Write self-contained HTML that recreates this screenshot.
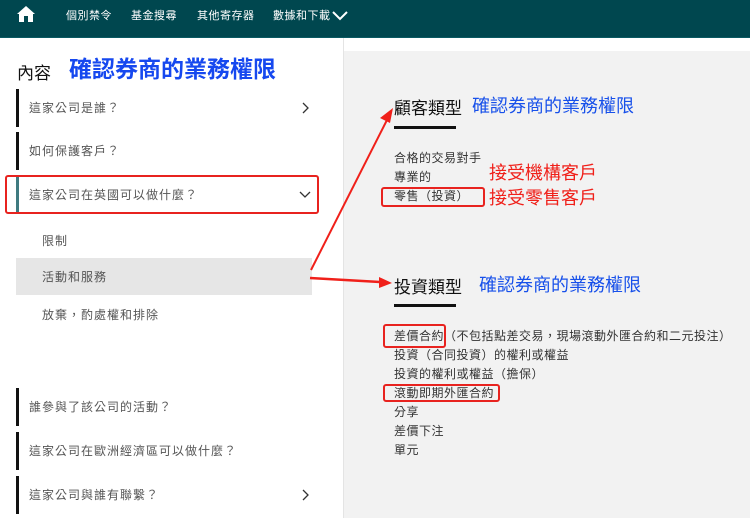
<!DOCTYPE html>
<html><head><meta charset="utf-8"><style>
*{margin:0;padding:0;box-sizing:border-box}
body{width:750px;height:518px;overflow:hidden;background:#fff;font-family:"Liberation Sans","Noto Sans CJK TC",sans-serif;position:relative;color:#333}
.nav{position:absolute;left:0;top:0;width:750px;height:38px;background:#00474f;border-bottom:1px solid #0a5a63}
.nav span{position:absolute;top:7px;color:#fff;font-size:11px;letter-spacing:.5px}
.right{position:absolute;left:343px;top:51px;width:407px;height:467px;background:#f2f2f2;border-left:1px solid #e4e4e4}
.rtop{position:absolute;left:343px;top:38px;width:407px;height:13px;border-left:1px solid #e4e4e4;background:#fff}
.t{position:absolute;white-space:nowrap}
.item{position:absolute;left:16px;height:38px;border-left:3px solid #111;width:300px;font-size:12px;color:#555;padding-left:10px;line-height:38px;letter-spacing:1px}
.sub{position:absolute;left:42px;font-size:12px;color:#555;letter-spacing:1px}
.list{position:absolute;left:394px;font-size:12px;color:#333;line-height:19px;letter-spacing:.5px}
.box{position:absolute;border:2px solid #e8231f;border-radius:3px}
.blue{color:#1750ea}
</style></head><body>
<div class="nav">
<svg style="position:absolute;left:16px;top:5px" width="20" height="18" viewBox="0 0 20 18"><path d="M10 1 L19 9 L17 9 L17 17 L12 17 L12 11 L8 11 L8 17 L3 17 L3 9 L1 9 Z" fill="#fff"/></svg>
<span style="left:66px">個別禁令</span><span style="left:131px">基金搜尋</span><span style="left:197px">其他寄存器</span><span style="left:273px">數據和下載</span>
<svg style="position:absolute;left:332px;top:10px" width="16" height="11" viewBox="0 0 16 11"><path d="M1 2 L8 9 L15 2" stroke="#fff" stroke-width="2" fill="none"/></svg>
</div>
<div class="rtop"></div>
<div class="right"></div>

<div class="t" style="left:17px;top:59px;font-size:17px;color:#111">內容</div>
<div class="t" style="left:69px;top:50px;font-size:23px;font-weight:bold;color:#1648ef">確認券商的業務權限</div>

<div class="item" style="top:89px">這家公司是誰？</div>
<svg style="position:absolute;left:302px;top:102px" width="8" height="12" viewBox="0 0 8 12"><path d="M1 1 L6 6 L1 11" stroke="#333" stroke-width="1.3" fill="none"/></svg>
<div class="item" style="top:132px">如何保護客戶？</div>
<div class="item" style="top:176px;border-left-color:#3f7a80">這家公司在英國可以做什麼？</div>
<svg style="position:absolute;left:299px;top:191px" width="12" height="8" viewBox="0 0 12 8"><path d="M1 1 L6 6 L11 1" stroke="#333" stroke-width="1.3" fill="none"/></svg>
<div class="box" style="left:5px;top:175px;width:314px;height:39px"></div>

<div class="sub" style="top:232px">限制</div>
<div style="position:absolute;left:16px;top:258px;width:296px;height:37px;background:#e6e6e6"></div>
<div class="sub" style="top:268px">活動和服務</div>
<div class="sub" style="top:306px">放棄，酌處權和排除</div>

<div class="item" style="top:388px">誰參與了該公司的活動？</div>
<div class="item" style="top:432px">這家公司在歐洲經濟區可以做什麼？</div>
<div class="item" style="top:476px">這家公司與誰有聯繫？</div>
<svg style="position:absolute;left:302px;top:489px" width="8" height="12" viewBox="0 0 8 12"><path d="M1 1 L6 6 L1 11" stroke="#333" stroke-width="1.3" fill="none"/></svg>

<div class="t" style="left:394px;top:94px;font-size:17px;color:#111">顧客類型</div>
<div class="t blue" style="left:472px;top:92px;font-size:18px">確認券商的業務權限</div>
<div style="position:absolute;left:394px;top:126px;width:62px;height:3px;background:#111"></div>
<div class="list" style="top:149px">合格的交易對手<br>專業的<br>零售（投資）</div>
<div class="box" style="left:381px;top:187px;width:104px;height:20px"></div>
<div class="t" style="left:489px;top:159px;font-size:18px;color:#f0201a">接受機構客戶</div>
<div class="t" style="left:489px;top:184px;font-size:18px;color:#f0201a">接受零售客戶</div>

<div class="t" style="left:394px;top:273px;font-size:17px;color:#111">投資類型</div>
<div class="t blue" style="left:479px;top:271px;font-size:18px">確認券商的業務權限</div>
<div style="position:absolute;left:394px;top:304px;width:62px;height:3px;background:#111"></div>
<div class="list" style="top:327px">差價合約（不包括點差交易，現場滾動外匯合約和二元投注）<br>投資（合同投資）的權利或權益<br>投資的權利或權益（擔保）<br>滾動即期外匯合約<br>分享<br>差價下注<br>單元</div>
<div class="box" style="left:383px;top:324px;width:63px;height:24px"></div>
<div class="box" style="left:383px;top:384px;width:117px;height:18px"></div>

<svg style="position:absolute;left:0;top:0" width="750" height="518">
<path d="M311 270 L388 118" stroke="#f0201a" stroke-width="2" fill="none"/>
<path d="M393 108 L380 118 L390 123 Z" fill="#f0201a"/>
<path d="M310 278 L380 282" stroke="#f0201a" stroke-width="2.5" fill="none"/>
<path d="M392 283 L379 277 L379 288 Z" fill="#f0201a"/>
</svg>
</body></html>
